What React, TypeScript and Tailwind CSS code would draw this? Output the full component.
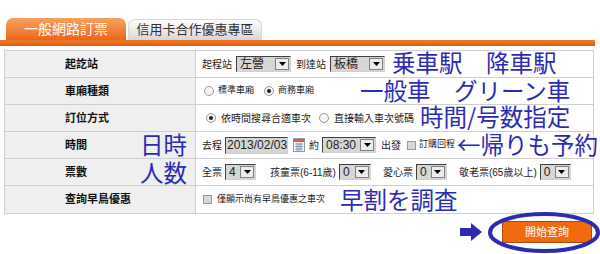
import React from 'react';

const Select = ({ value, w }: { value: string; w: string }) => (
  <div className={`${w} h-[16px] shrink-0 flex items-stretch border border-t-[#404040] border-l-[#404040] border-b-[#d0d0d0] border-r-[#d0d0d0] bg-[#d6d6d6]`}>
    <span className="flex-1 pl-[3px] text-[12px] leading-[14px] text-[#222]">{value}</span>
    <span className="w-[14px] m-[1px] bg-[#ececec] border border-[#808080] flex items-center justify-center">
      <svg width="7" height="4" viewBox="0 0 7 4"><path d="M0 0h7L3.5 4z" fill="#000" /></svg>
    </span>
  </div>
);

const Radio = ({ on }: { on?: boolean }) => (
  <span className="w-[10px] h-[10px] shrink-0 rounded-full border border-[#999] bg-[#f4f4f4] flex items-center justify-center">
    {on && <span className="w-[4px] h-[4px] rounded-full bg-[#222]" />}
  </span>
);

const Check = () => <span className="block w-[9px] h-[9px] shrink-0 border border-[#999] bg-[#d8d8d8]" />;

const Row = ({ label, children, last, gap = 'gap-[4px]' }: { label: string; children: React.ReactNode; last?: boolean; gap?: string }) => (
  <div className={`flex ${last ? '' : 'border-b border-[#cfcfcf]'} h-[27px]`}>
    <div className="w-[191px] shrink-0 bg-[#efefef] border-r border-[#cfcfcf] pl-[60px] flex items-center text-[11px] font-bold text-[#111]">{label}</div>
    <div className={`flex-1 bg-white flex items-center pl-[6px] text-[10px] text-[#222] whitespace-nowrap ${gap}`}>{children}</div>
  </div>
);

const Note = ({ className, children }: { className: string; children: React.ReactNode }) => (
  <div className={`absolute text-[23.5px] leading-none text-[#2c2cb2] whitespace-nowrap ${className}`} style={{ fontFamily: '"Noto Sans CJK JP", sans-serif' }}>
    {children}
  </div>
);

const App: React.FC = () => {
  return (
    <div className="relative w-[600px] h-[254px] bg-white overflow-hidden" style={{ fontFamily: '"Liberation Sans", "Noto Sans CJK TC", sans-serif' }}>
      {/* tabs */}
      <div className="flex items-end pt-[18px] pl-[6px] h-[40px]">
        <div className="w-[120px] h-[22px] rounded-t-[7px] bg-gradient-to-b from-[#f9a15c] to-[#ea6515] flex items-center justify-center text-white text-[14px]">一般網路訂票</div>
        <div className="ml-[2px] w-[134px] h-[21px] rounded-t-[7px] border border-b-0 border-[#d8d8d8] bg-gradient-to-b from-[#ffffff] to-[#d6d6d6] flex items-center justify-center text-[#333] text-[13px]">信用卡合作優惠專區</div>
      </div>
      <div className="h-[6px] w-[595px] bg-gradient-to-b from-[#f07a2a] to-[#e15a10]" />

      {/* form table */}
      <div className="mt-[4px] ml-[4px] w-[590px] border border-[#cfcfcf]">
        <Row label="起訖站">
          <span>起程站</span>
          <Select value="左營" w="w-[55px]" />
          <span className="ml-[1px]">到達站</span>
          <Select value="板橋" w="w-[55px]" />
        </Row>
        <Row label="車廂種類">
          <span className="ml-[2px]"><Radio /></span>
          <span className="text-[9px]">標準車廂</span>
          <span className="ml-[6px]"><Radio on /></span>
          <span className="text-[9px]">商務車廂</span>
        </Row>
        <Row label="訂位方式">
          <span className="ml-[4px]"><Radio on /></span>
          <span className="ml-[1px]">依時間搜尋合適車次</span>
          <span className="ml-[4px]"><Radio /></span>
          <span className="ml-[1px]">直接輸入車次號碼</span>
        </Row>
        <Row label="時間" gap="gap-[3px]">
          <span>去程</span>
          <div className="w-[63px] h-[17px] shrink-0 overflow-hidden border border-t-[#404040] border-l-[#404040] border-b-[#d0d0d0] border-r-[#d0d0d0] bg-[#d6d6d6] text-[12px] leading-[15px] pl-[1px]">2013/02/03</div>
          <svg width="12" height="14" viewBox="0 0 12 14" className="ml-[2px] shrink-0">
            <rect x="0.5" y="0.5" width="11" height="13" fill="#fff" stroke="#9a9a9a" />
            <rect x="1" y="1" width="10" height="3" fill="#e0583a" />
            <path d="M2 6h8M2 8.5h8M2 11h8M4 5v8M6 5v8M8 5v8" stroke="#6c86b0" strokeWidth="0.8" />
          </svg>
          <span className="ml-[1px]">約</span>
          <Select value="08:30" w="w-[54px]" />
          <span className="ml-[2px]">出發</span>
          <span className="ml-[3px]"><Check /></span>
          <span className="text-[9px]">訂購回程</span>
        </Row>
        <Row label="票數" gap="gap-[3px]">
          <span>全票</span>
          <Select value="4" w="w-[31px]" />
          <span className="ml-[11px]">孩童票(6-11歲)</span>
          <Select value="0" w="w-[32px]" />
          <span className="ml-[9px]">愛心票</span>
          <Select value="0" w="w-[31px]" />
          <span className="ml-[9px]">敬老票(65歲以上)</span>
          <Select value="0" w="w-[31px]" />
        </Row>
        <Row label="查詢早鳥優惠" last>
          <span className="ml-[1px]"><Check /></span>
          <span className="ml-[1px] text-[9px]">僅顯示尚有早鳥優惠之車次</span>
        </Row>
      </div>

      {/* start button */}
      <div className="absolute left-[502px] top-[221px] w-[90px] h-[22px] bg-[#f26a10] border border-[#b04a08] flex items-center justify-center text-white text-[11px]">開始查詢</div>
      <svg className="absolute left-[486px] top-[211px]" width="114" height="43" viewBox="0 0 114 43">
        <ellipse cx="58" cy="21.5" rx="54" ry="18.5" fill="none" stroke="#2c2cb2" strokeWidth="4" />
      </svg>
      <svg className="absolute left-[460px] top-[223px]" width="22" height="18" viewBox="0 0 22 18">
        <path d="M0 5h11V0l11 9-11 9v-5H0z" fill="#2c2cb2" />
      </svg>

      {/* annotations */}
      <Note className="left-[392px] top-[51px]">乗車駅　降車駅</Note>
      <Note className="left-[360px] top-[79px]">一般車　グリーン車</Note>
      <Note className="left-[420px] top-[105px]">時間/号数指定</Note>
      <Note className="left-[457px] top-[133px]">←帰りも予約</Note>
      <Note className="left-[140px] top-[133px]">日時</Note>
      <Note className="left-[140px] top-[161px]">人数</Note>
      <Note className="left-[340px] top-[188px]">早割を調査</Note>
    </div>
  );
};

export default App;
